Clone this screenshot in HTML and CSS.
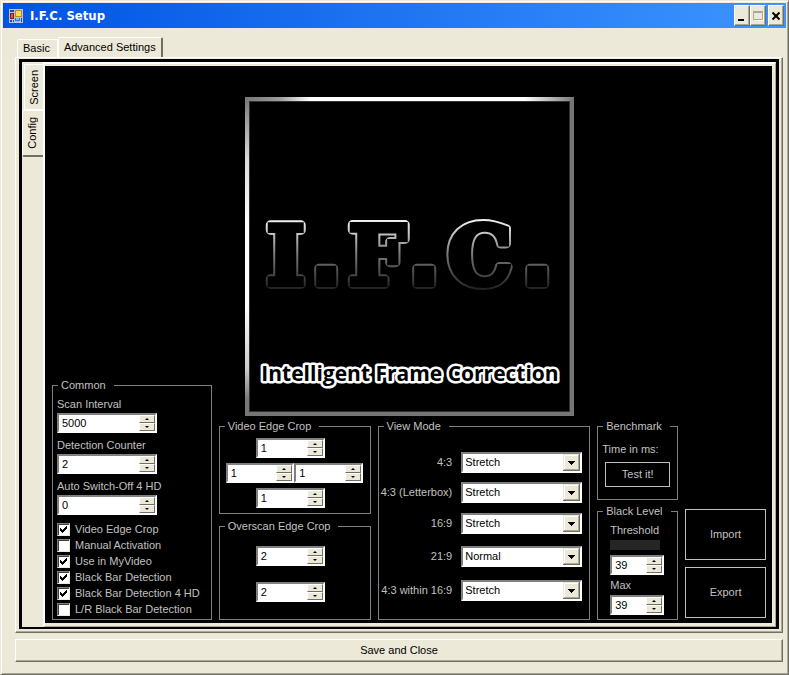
FILE: index.html
```html
<!DOCTYPE html>
<html lang="en">
<head>
<meta charset="utf-8">
<title>I.F.C. Setup</title>
<link rel="stylesheet" href="styles.css">
</head>
<body>
<div class="window">
  <header class="titlebar">
    <svg class="app-icon" width="14" height="14" viewBox="0 0 14 14" aria-hidden="true">
      <rect width="14" height="14" fill="#b9c4dc"/>
      <rect x="1" y="1" width="4" height="2" fill="#1c4cae"/>
      <rect x="1" y="4" width="4" height="6" fill="#8c1c14"/>
      <rect x="2" y="5" width="2" height="4" fill="#e2553c"/>
      <rect x="6" y="1" width="7" height="7" fill="#b98a1c"/>
      <rect x="7" y="2" width="5" height="5" fill="#ffd75a"/>
      <rect x="6" y="9" width="5" height="3" fill="#2f6fd8"/>
      <rect x="7" y="9" width="3" height="2" fill="#8ab8f4"/>
      <rect x="1" y="11" width="2" height="2" fill="#1c4cae"/>
      <rect x="4" y="11" width="1" height="2" fill="#1c4cae"/>
      <rect x="12" y="9" width="1" height="4" fill="#1c4cae"/>
    </svg>
    <h1 class="title">I.F.C. Setup</h1>
    <div class="caption-buttons">
      <button type="button" class="cap" aria-label="Minimize"><svg width="10" height="10" viewBox="0 0 10 10"><path d="M1 9h6" stroke="#000" stroke-width="2"/></svg></button>
      <button type="button" class="cap" aria-label="Maximize" disabled><svg width="12" height="10" viewBox="0 0 12 10"><path d="M2.500 9.500h9v-8" fill="none" stroke="#fff"/><path d="M1.500 1.500h9v7h-9zM1 .5h10" fill="none" stroke="#aca899"/></svg></button>
      <button type="button" class="cap cap-close" aria-label="Close"><svg width="10" height="10" viewBox="0 0 10 10"><path d="M1.500 1.500l7 7M8.500 1.500l-7 7" stroke="#000" stroke-width="2"/></svg></button>
    </div>
  </header>

  <main class="client">
    <nav class="tabs">
      <button type="button" class="tab">Basic</button>
      <button type="button" class="tab tab-active">Advanced Settings</button>
    </nav>
    <div class="panel">
      <div class="page">
        <nav class="side-tabs">
          <button type="button" class="side-tab"><span>Screen</span></button>
          <button type="button" class="side-tab side-tab-active"><span>Config</span></button>
        </nav>
        <div class="config">
          <svg class="logo" width="329" height="319" viewBox="0 0 329 319" role="img" aria-label="I.F.C. Intelligent Frame Correction">
            <defs>
              <linearGradient id="top" x1="0" x2="1" y1="0" y2="0"><stop offset="0" stop-color="#777"/><stop offset=".1" stop-color="#999"/><stop offset=".2" stop-color="#fff"/><stop offset=".85" stop-color="#fff"/><stop offset="1" stop-color="#777"/></linearGradient>
              <linearGradient id="left" x1="0" x2="0" y1="0" y2="1"><stop offset="0" stop-color="#777"/><stop offset=".2" stop-color="#ddd"/><stop offset=".4" stop-color="#fff"/><stop offset=".65" stop-color="#fff"/><stop offset=".85" stop-color="#ccc"/><stop offset=".95" stop-color="#777"/></linearGradient>
              <linearGradient id="fade" gradientUnits="userSpaceOnUse" x1="0" x2="0" y1="124" y2="192"><stop offset="0" stop-color="#eee"/><stop offset=".5" stop-color="#777"/><stop offset="1" stop-color="#222"/></linearGradient>
            </defs>
            <rect width="329" height="319" fill="#757575"/>
            <path d="M0 0h329l-4 4h-325z" fill="url(#top)"/>
            <path d="M0 0l4 4v311l-4 4z" fill="url(#left)"/>
            <rect x="4" y="4" width="321" height="311" fill="#000"/>
            <rect x="4.500" y="4.500" width="320" height="310" fill="none" stroke="#333"/>
            <g class="monogram">
              <text class="ring" y="187"><tspan x="22">I</tspan><tspan class="dot" x="66">.</tspan><tspan x="104">F</tspan><tspan class="dot" x="164">.</tspan><tspan x="203">C</tspan><tspan class="dot" x="277">.</tspan></text>
              <text class="core" aria-hidden="true" y="187"><tspan x="22">I</tspan><tspan class="dot" x="66">.</tspan><tspan x="104">F</tspan><tspan class="dot" x="164">.</tspan><tspan x="203">C</tspan><tspan class="dot" x="277">.</tspan></text>
            </g>
            <text class="tagline" x="165" y="284" text-anchor="middle">Intelligent Frame Correction</text>
          </svg>

          <fieldset class="group common">
            <legend>Common</legend>
            <label for="scan">Scan Interval</label>
            <div class="spin"><input id="scan" type="number" value="5000"><button type="button" class="up" aria-label="Increase"></button><button type="button" class="down" aria-label="Decrease"></button></div>
            <label for="counter">Detection Counter</label>
            <div class="spin"><input id="counter" type="number" value="2"><button type="button" class="up" aria-label="Increase"></button><button type="button" class="down" aria-label="Decrease"></button></div>
            <label for="autooff">Auto Switch-Off 4 HD</label>
            <div class="spin"><input id="autooff" type="number" value="0"><button type="button" class="up" aria-label="Increase"></button><button type="button" class="down" aria-label="Decrease"></button></div>
            <div class="checks">
              <label class="check"><input type="checkbox" checked>Video Edge Crop</label>
              <label class="check"><input type="checkbox">Manual Activation</label>
              <label class="check"><input type="checkbox" checked>Use in MyVideo</label>
              <label class="check"><input type="checkbox" checked>Black Bar Detection</label>
              <label class="check"><input type="checkbox" checked>Black Bar Detection 4 HD</label>
              <label class="check"><input type="checkbox">L/R Black Bar Detection</label>
            </div>
          </fieldset>

          <div class="stack crops">
            <fieldset class="group video-crop">
              <legend>Video Edge Crop</legend>
              <div class="crop-row single"><div class="spin"><input type="number" value="1" aria-label="Top"><button type="button" class="up" aria-label="Increase"></button><button type="button" class="down" aria-label="Decrease"></button></div></div>
              <div class="crop-row pair">
                <div class="spin"><input type="number" value="1" aria-label="Left"><button type="button" class="up" aria-label="Increase"></button><button type="button" class="down" aria-label="Decrease"></button></div>
                <div class="spin"><input type="number" value="1" aria-label="Right"><button type="button" class="up" aria-label="Increase"></button><button type="button" class="down" aria-label="Decrease"></button></div>
              </div>
              <div class="crop-row single"><div class="spin"><input type="number" value="1" aria-label="Bottom"><button type="button" class="up" aria-label="Increase"></button><button type="button" class="down" aria-label="Decrease"></button></div></div>
            </fieldset>
            <fieldset class="group overscan">
              <legend>Overscan Edge Crop</legend>
              <div class="crop-row single"><div class="spin"><input type="number" value="2" aria-label="Horizontal overscan"><button type="button" class="up" aria-label="Increase"></button><button type="button" class="down" aria-label="Decrease"></button></div></div>
              <div class="crop-row single"><div class="spin"><input type="number" value="2" aria-label="Vertical overscan"><button type="button" class="up" aria-label="Increase"></button><button type="button" class="down" aria-label="Decrease"></button></div></div>
            </fieldset>
          </div>

          <fieldset class="group view">
            <legend>View Mode</legend>
            <div class="modes">
              <label for="m43">4:3</label><select id="m43"><option>Stretch</option><option>Normal</option></select>
              <label for="mlb">4:3 (Letterbox)</label><select id="mlb"><option>Stretch</option><option>Normal</option></select>
              <label for="m169">16:9</label><select id="m169"><option>Stretch</option><option>Normal</option></select>
              <label for="m219">21:9</label><select id="m219"><option>Normal</option><option>Stretch</option></select>
              <label for="mw">4:3 within 16:9</label><select id="mw"><option>Stretch</option><option>Normal</option></select>
            </div>
          </fieldset>

          <div class="stack levels">
            <fieldset class="group bench">
              <legend>Benchmark</legend>
              <p>Time in ms:</p>
              <button type="button" class="flat">Test it!</button>
            </fieldset>
            <fieldset class="group black">
              <legend>Black Level</legend>
              <label for="threshold">Threshold</label>
              <div class="swatch"></div>
              <div class="spin"><input id="threshold" type="number" value="39"><button type="button" class="up" aria-label="Increase"></button><button type="button" class="down" aria-label="Decrease"></button></div>
              <label for="max">Max</label>
              <div class="spin"><input id="max" type="number" value="39"><button type="button" class="up" aria-label="Increase"></button><button type="button" class="down" aria-label="Decrease"></button></div>
            </fieldset>
          </div>

          <div class="transfer">
            <button type="button" class="flat">Import</button>
            <button type="button" class="flat">Export</button>
          </div>
        </div>
      </div>
    </div>
    <button type="button" class="save">Save and Close</button>
  </main>
</div>
</body>
</html>
```
FILE: styles.css
```css
* { box-sizing: border-box; }

body {
  margin: 0;
  background: #ece9d8;
  color: #000;
  font: 11px/13px "Liberation Sans", Arial, sans-serif;
}

button, input, select {
  font: inherit;
  color: inherit;
  border-radius: 0;
  margin: 0;
}

button { padding: 0; }

.window {
  min-height: 100vh;
  display: flex;
  flex-direction: column;
  padding: 1px;
  background: #ece9d8;
  border: 1px solid;
  border-color: #ece9d8 #716f64 #716f64 #ece9d8;
  box-shadow: inset 1px 1px #fff, inset -1px -1px #aca899;
}

/* Title bar */
.titlebar {
  display: flex;
  align-items: center;
  gap: 7px;
  height: 25px;
  margin: 1px 1px 0;
  padding: 0 2px 0 6px;
  background: linear-gradient(90deg, #0054e3, #3d95ff);
}

.title {
  flex: 1;
  margin: 0;
  color: #fff;
  font: bold 13px/16px "DejaVu Sans Condensed", "DejaVu Sans", sans-serif;
}

.caption-buttons { display: flex; }

.cap {
  display: grid;
  place-items: center;
  width: 16px;
  height: 21px;
  background: #ece9d8;
  border: 1px solid;
  border-color: #fff #716f64 #716f64 #fff;
  box-shadow: inset -1px -1px #aca899;
}

.cap-close { margin-left: 2px; }

/* Client area */
.client {
  flex: 1;
  display: flex;
  flex-direction: column;
  padding: 9px 4px 11px 13px;
}

.tabs {
  display: flex;
  align-items: flex-end;
  padding-left: 2px;
}

.tab {
  height: 18px;
  padding: 0 7px 0 5px;
  background: #ece9d8;
  border: 1px solid #fff;
  border-bottom: 0;
  border-radius: 2px 2px 0 0;
}

.tab-active {
  height: 20px;
  padding: 0 5px;
  border-right: 2px solid #716f64;
}

.panel {
  flex: 1;
  display: flex;
  padding: 1px 3px 3px;
  border: 1px solid;
  border-color: #fff #716f64 #716f64 #fff;
  box-shadow: inset -1px -1px #aca899;
}

.page {
  flex: 1;
  display: flex;
  border: 3px solid #000;
  border-bottom-width: 2px;
}

.side-tabs {
  display: flex;
  flex-direction: column;
  align-items: flex-end;
  width: 21px;
  padding-top: 2px;
  background: #ece9d8;
}

.side-tab {
  display: grid;
  place-items: center;
  width: 19px;
  height: 46px;
  background: #ece9d8;
  border: 1px solid #fff;
  border-right: 0;
  border-radius: 2px 0 0 2px;
}

.side-tab span {
  writing-mode: vertical-rl;
  transform: rotate(180deg);
}

.side-tab-active {
  width: 21px;
  height: 47px;
  padding-right: 2px;
  border-bottom: 2px solid #716f64;
}

/* Config page */
.config {
  flex: 1;
  display: grid;
  grid-template-columns: minmax(0, 160fr) minmax(0, 152fr) minmax(0, 213fr) minmax(0, 81fr) minmax(0, 81fr);
  grid-template-rows: 1fr auto;
  column-gap: 7px;
  padding: 2px 9px 6px 7px;
  background: #000;
  color: #c0c0c0;
  border: solid #fff;
  border-width: 2px 1px 1px 2px;
  border-right-color: #aca899;
  border-bottom-color: #aca899;
  box-shadow: inset 0 2px #ece9d8, inset -3px -3px #ece9d8;
}

.logo {
  grid-area: 1 / 1 / 2 / -1;
  justify-self: center;
  margin: 31px 0 4px;
}

.monogram { font: bold 80px "DejaVu Serif", serif; }
.dot { font-family: "DejaVu Sans", sans-serif; }

.ring {
  fill: none;
  stroke: url(#fade);
  stroke-width: 10px;
  stroke-linejoin: round;
}

.core {
  fill: #000;
  stroke: #000;
  stroke-width: 6px;
}

.tagline {
  font: bold 21px "Open Sans", sans-serif;
  fill: #000;
  stroke: #fff;
  stroke-width: 5px;
  stroke-linejoin: round;
  paint-order: stroke;
}

.group {
  min-width: 0;
  margin: 0;
  padding: 0;
  border: 1px solid #808080;
}

.group legend {
  height: 13px;
  margin-left: 5px;
  padding: 0 8px 0 3px;
  white-space: nowrap;
}

.group label { display: block; }

.common {
  grid-area: 1 / 1 / 3 / 2;
  align-self: end;
  padding: 6px 4px 2px;
}

.common legend { margin-left: 1px; }

.common .spin {
  width: 100px;
  margin: 2px 0 6px;
}

.group .check {
  display: flex;
  align-items: center;
  gap: 5px;
  height: 16px;
  white-space: nowrap;
}

.check input {
  appearance: none;
  width: 13px;
  height: 13px;
  background: #fff;
  border: 1px solid;
  border-color: #808080 #ece9d8 #ece9d8 #808080;
  box-shadow: inset 1px 1px #404040;
}

.check input:checked {
  background: #fff url("data:image/svg+xml,%3Csvg xmlns='http://www.w3.org/2000/svg' width='7' height='7' shape-rendering='crispEdges'%3E%3Cpath d='M0 2h1v1h1v1h1v-1h1v-1h1v-1h1v-1h1v3h-1v1h-1v1h-1v1h-1v1h-1v-1h-1v-1h-1z'/%3E%3C/svg%3E") center no-repeat;
}

.stack {
  display: flex;
  flex-direction: column;
}

.crops { grid-area: 2 / 2; gap: 6px; }
.view { grid-area: 2 / 3; }
.levels { grid-area: 2 / 4; gap: 5px; }
.transfer { grid-area: 2 / 5; }

/* Spinner */
.spin {
  display: grid;
  grid-template: 8px 8px / minmax(0, 1fr) 16px;
  background: #fff;
  color: #000;
  border: 2px solid;
  border-color: #808080 #fff #fff #808080;
}

.spin input {
  grid-row: 1 / 3;
  min-width: 0;
  width: 100%;
  height: 16px;
  padding: 0 0 0 3px;
  border: 0;
  background: none;
  appearance: textfield;
  outline: 0;
}

.spin input::-webkit-inner-spin-button { appearance: none; display: none; }

.up, .down {
  display: grid;
  place-items: center;
  background: #ece9d8;
  border: 1px solid;
  border-color: #fff #716f64 #716f64 #fff;
}

.up::before, .down::before {
  content: "";
  border: 2px solid transparent;
  border-top-width: 0;
  border-bottom: 2px solid #000;
}

.down::before {
  border-top: 2px solid #000;
  border-bottom-width: 0;
}

.crop-row { display: flex; justify-content: center; }
.single { padding-right: 9px; }
.single .spin { width: 69px; }
.pair { padding: 0 7px 0 6px; }
.pair .spin { flex: 1; }

.video-crop {
  display: flex;
  flex-direction: column;
  gap: 5px;
  padding: 5px 0;
}

.overscan {
  flex: 1;
  display: flex;
  flex-direction: column;
  gap: 16px;
  padding: 13px 0 10px;
}

/* View modes */
.modes {
  display: grid;
  grid-template-columns: 1fr 121px;
  grid-template-rows: 30px 31px 33px 34px 21px;
  column-gap: 9px;
  padding: 19px 7px 10px 0;
  line-height: 21px;
  text-align: right;
  white-space: nowrap;
}

.modes select {
  appearance: none;
  height: 21px;
  padding: 0 20px 0 2px;
  color: #000;
  line-height: 15px;
  border: 2px solid;
  border-color: #808080 #fff #fff #808080;
  background: #fff url("data:image/svg+xml,%3Csvg xmlns='http://www.w3.org/2000/svg' width='17' height='17' shape-rendering='crispEdges'%3E%3Cpath fill='%23716f64' d='M0 0h17v17H0z'/%3E%3Cpath fill='%23ece9d8' d='M0 0h16v16H0z'/%3E%3Cpath fill='%23aca899' d='M1 1h15v15H1z'/%3E%3Cpath fill='%23fff' d='M1 1h14v14H1z'/%3E%3Cpath fill='%23ece9d8' d='M2 2h13v13H2z'/%3E%3Cpath d='M5 7h7v1h-1v1h-1v1H9v1H8v-1H7V9H6V8H5z'/%3E%3C/svg%3E") right center no-repeat;
}

/* Right-hand groups */
.flat {
  background: #000;
  color: #c0c0c0;
  border: 1px solid #c0c0c0;
}

.bench { padding: 10px 7px 12px; }
.bench legend { margin-left: -2px; }
.bench p { margin: 0 -3px 6px; }
.bench .flat { display: block; width: 100%; height: 25px; }

.black { flex: 1; padding: 6px 13px 4px 12px; }
.black legend { margin-left: -7px; }
.black .spin { margin: 3px 0 4px; }
.black .spin:last-child { margin-bottom: 0; }
.swatch { height: 10px; margin: 3px 4px 5px 0; background: #262626; }

.transfer {
  display: flex;
  flex-direction: column;
  justify-content: flex-end;
  gap: 7px;
  padding-bottom: 2px;
}

.transfer .flat { height: 51px; }

.save {
  height: 23px;
  margin-top: 6px;
  background: #ece9d8;
  border: 1px solid;
  border-color: #fff #716f64 #716f64 #fff;
  box-shadow: inset -1px -1px #aca899;
}
```
